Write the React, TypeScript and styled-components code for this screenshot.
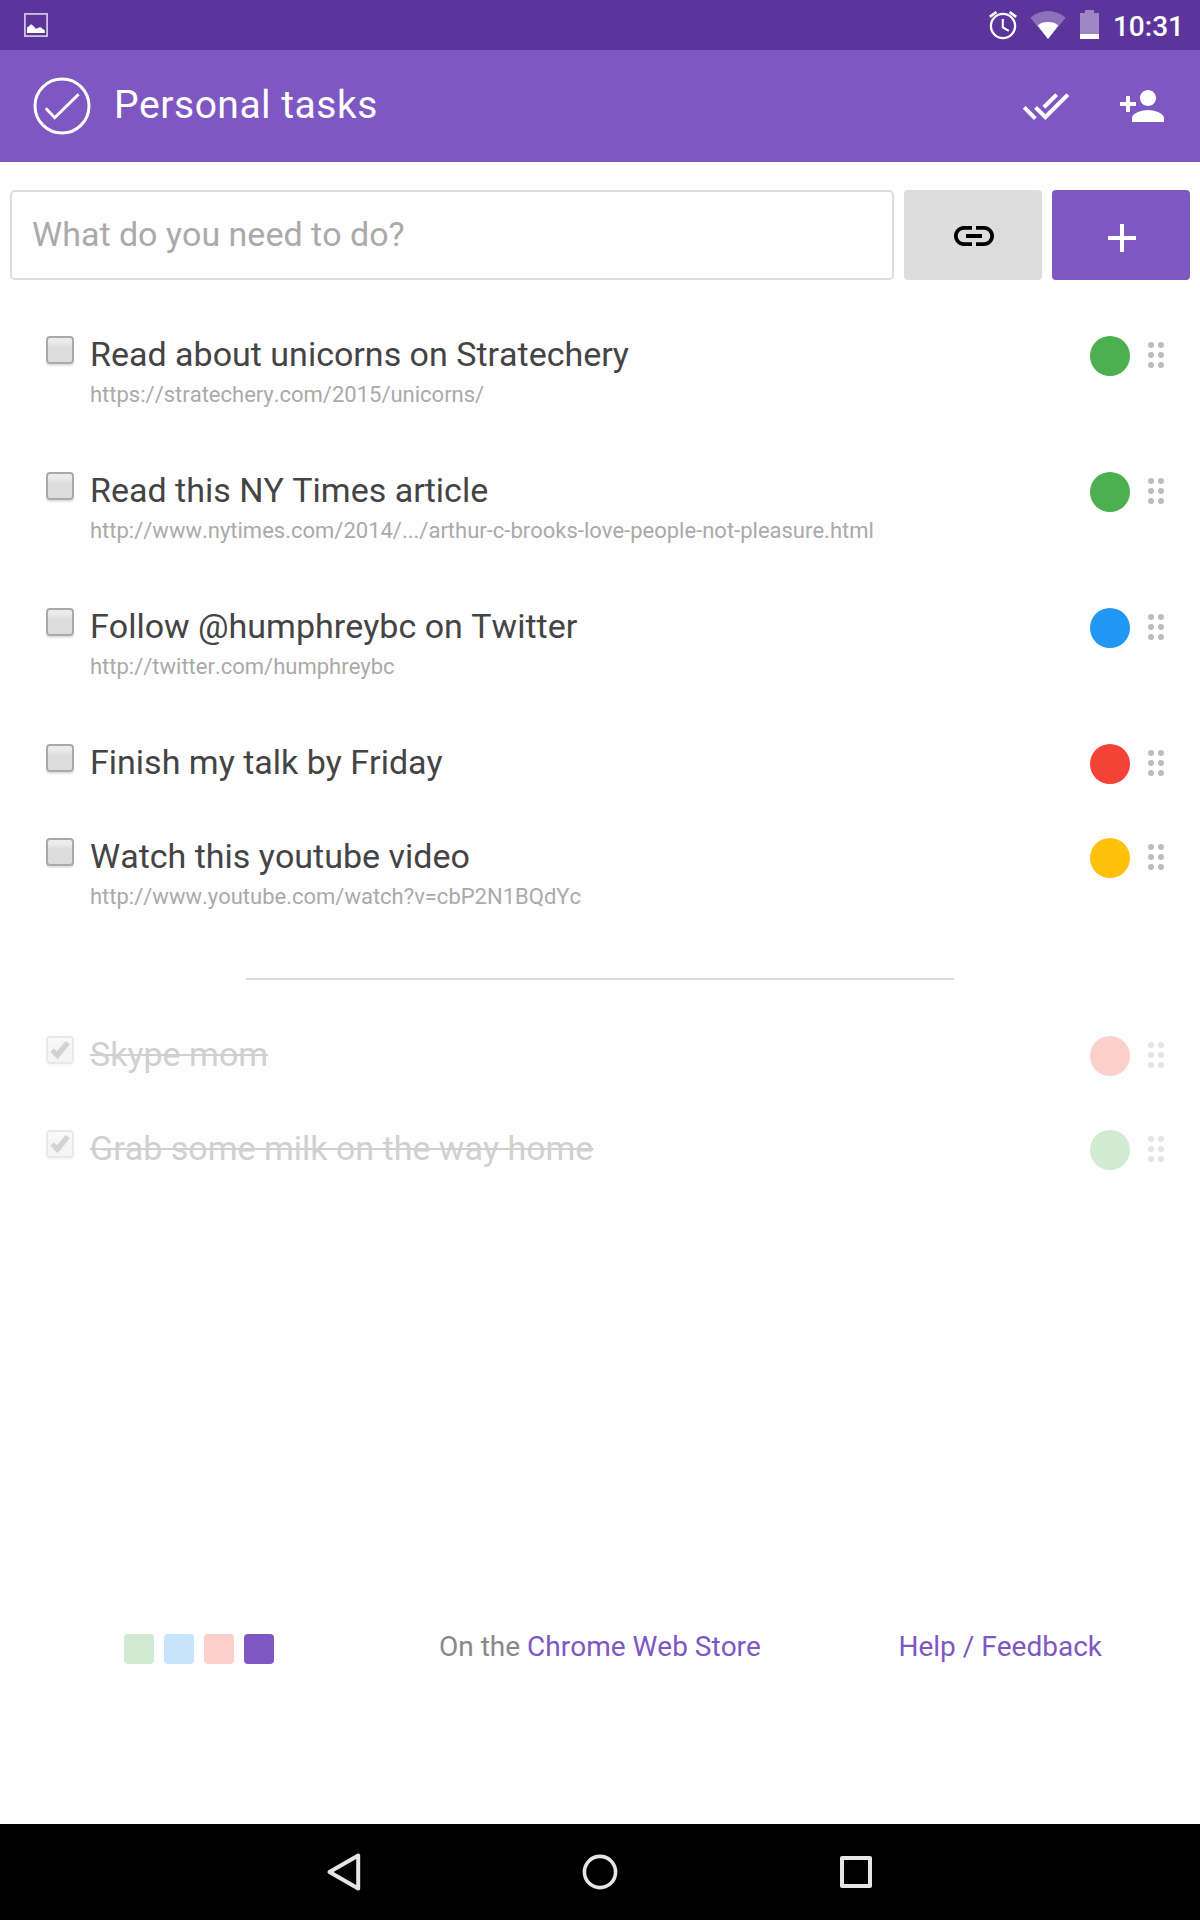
import React from "react";
import styled, { createGlobalStyle } from "styled-components";
import { MdAdd, MdDoneAll, MdLink, MdPersonAdd } from "react-icons/md";

const purple = "#7e57c2";

const GlobalStyle = createGlobalStyle`
  * { box-sizing: border-box; }
  body { margin: 0; background: #fff; font-family: Roboto, "Noto Sans", sans-serif; font-kerning: none; }
  svg { display: block; flex: none; }
  button { border: 0; padding: 0; font: inherit; color: inherit; cursor: pointer; }
`;

const Screen = styled.div`
  display: flex;
  flex-direction: column;
  width: 1200px;
  height: 1920px;
  overflow: hidden;
  background: #fefefe;
`;

const StatusBar = styled.div`
  display: flex;
  align-items: center;
  justify-content: space-between;
  height: 50px;
  padding: 0 16px 0 24px;
  background: #5b359c;
  color: #fff;
`;

const StatusIcons = styled.div`
  display: flex;
  align-items: center;
`;

const Clock = styled.span`
  margin-left: 14px;
  padding-top: 3px;
  font-size: 28px;
  line-height: 32px;
  font-weight: 500;
`;

const Header = styled.header`
  display: flex;
  align-items: center;
  height: 112px;
  padding: 0 34px 0 33px;
  background: ${purple};
  color: #fff;
`;

const Title = styled.h1`
  flex: 1;
  margin: 0 0 2px 23px;
  font-size: 39px;
  line-height: 48px;
  font-weight: 400;
  letter-spacing: 0.5px;
`;

const HeaderActions = styled.div`
  display: flex;
  gap: 48px;
`;

const HeaderButton = styled.button`
  background: none;
`;

const AddForm = styled.form`
  display: flex;
  gap: 10px;
  height: 90px;
  margin: 28px 10px 0;
`;

const TaskInput = styled.input`
  flex: 1;
  min-width: 0;
  padding: 0 20px 2px;
  border: 2px solid #ddd;
  border-radius: 5px;
  background: transparent;
  color: #444;
  font: 400 34px Roboto, sans-serif;
  font-kerning: none;
  outline: none;
  &::placeholder { color: #aaa; opacity: 1; }
`;

const FormButton = styled.button<{ $bg: string; $fg: string; $drop: number }>`
  display: flex;
  align-items: center;
  justify-content: center;
  width: 138px;
  padding: ${(p) => p.$drop}px 0 0 2px;
  border-radius: 4px;
  background: ${(p) => p.$bg};
  color: ${(p) => p.$fg};
`;

const TaskList = styled.ul`
  margin: 0;
  padding: 56px 36px 0 46px;
  list-style: none;
`;

const TaskRow = styled.li<{ $tall?: boolean }>`
  display: flex;
  align-items: flex-start;
  height: ${(p) => (p.$tall ? 136 : 94)}px;
`;

const Box = styled.span<{ $done?: boolean }>`
  flex: none;
  width: 28px;
  height: 28px;
  border: 2px solid #a9a9a9;
  border-radius: 4px;
  background: linear-gradient(#ededed 0%, #eaeaea 18%, #dedede 38%, #dcdcdc 100%);
  box-shadow: 0 2px 1px rgba(0, 0, 0, 0.1);
  opacity: ${(p) => (p.$done ? 0.25 : 1)};
`;

const CheckWrap = styled.span`
  display: grid;
  width: 28px;
  height: 28px;
  margin-right: 16px;
  > * { grid-area: 1 / 1; }
`;

const TaskBody = styled.div`
  flex: 1;
  min-width: 0;
`;

const TaskTitle = styled.div<{ $done?: boolean }>`
  width: fit-content;
  font-size: 34px;
  line-height: 36px;
  color: ${(p) => (p.$done ? "#d0d0d0" : "#444")};
  text-decoration: ${(p) => (p.$done ? "line-through" : "none")};
  text-decoration-thickness: 2px;
`;

const TaskUrl = styled.div`
  font-size: 22px;
  line-height: 26px;
  margin-top: 10px;
  color: #aaa;
`;

const Label = styled.span<{ $color: string; $done?: boolean }>`
  width: 40px;
  height: 40px;
  border-radius: 50%;
  background: ${(p) => p.$color};
  opacity: ${(p) => (p.$done ? 0.25 : 1)};
`;

const Handle = styled.span<{ $done?: boolean }>`
  display: grid;
  grid-template-columns: 6px 6px;
  grid-auto-rows: 6px;
  gap: 4px;
  margin: 6px 0 0 18px;
  opacity: ${(p) => (p.$done ? 0.4 : 1)};
  > i { border-radius: 50%; background: #bdbdbd; }
`;

const Divider = styled.hr`
  width: 708px;
  height: 2px;
  margin: 4px auto 0;
  border: 0;
  background: #ddd;
`;

const Footer = styled.footer`
  display: flex;
  align-items: center;
  height: 30px;
  margin: auto 98px 160px 124px;
  font-size: 28px;
  line-height: 34px;
  color: #888;
`;

const Swatches = styled.div`
  display: flex;
  gap: 10px;
`;

const Swatch = styled.span<{ $color: string; $faded?: boolean }>`
  width: 30px;
  height: 30px;
  border-radius: 4px;
  background: ${(p) => p.$color};
  opacity: ${(p) => (p.$faded ? 0.25 : 1)};
`;

const StoreText = styled.span`
  margin: 0 auto 5px 165px;
`;

const HelpText = styled.span`
  margin-bottom: 5px;
`;

const Link = styled.a`
  color: ${purple};
  text-decoration: none;
`;

const NavBar = styled.nav`
  display: flex;
  align-items: center;
  justify-content: center;
  gap: 208px;
  height: 96px;
  background: #000;
`;

const WifiIcon = styled.svg`
  margin-left: 13px;
`;

const BatteryIcon = styled.svg`
  margin-left: 14px;
`;

const Picture = () => (
  <svg width="24" height="24" viewBox="0 0 24 24">
    <rect x="0.9" y="0.9" width="22.2" height="22.2" fill="none" stroke="#dcd3ea" strokeWidth="1.6" />
    <path d="M3 20V14.5Q5 13.5 7 11.3Q10 12.5 11.5 15.5Q13 16 15.5 14.2Q18 14 18.5 16Q20 16 20.8 17.5V20Z" fill="#fff" />
  </svg>
);

const Alarm = () => (
  <svg width="28" height="30" viewBox="0 0 28 30" fill="none" stroke="#fff">
    <circle cx="14" cy="16" r="12.1" strokeWidth="2.3" />
    <path d="M13.8 9V17.4L19.8 20.8" strokeWidth="2.1" />
    <path d="M.8 6.8L7.4 2M27.2 6.8L20.6 2" strokeWidth="2.7" />
  </svg>
);

const Wifi = () => (
  <WifiIcon width="36" height="30" viewBox="0 0 36 30">
    <path d="M18 29L.5 7.7Q8 1 18 1T35.5 7.7Z" fill="#8e71bb" />
    <path d="M18 29L7.6 15.4Q11.5 12 18 12T28.4 15.4Z" fill="#fff" />
  </WifiIcon>
);

const Battery = () => (
  <BatteryIcon width="19" height="30" viewBox="0 0 19 30">
    <path d="M0 3H5V0H14V3H19V24H0Z" fill="#9f87c6" />
    <path d="M0 24H19V29H0Z" fill="#fff" />
  </BatteryIcon>
);

const Logo = () => (
  <svg width="58" height="58" viewBox="0 0 58 58" fill="none" stroke="#fff">
    <circle cx="29" cy="29" r="27" strokeWidth="3" />
    <path d="M12.8 31.3L21.7 40.7L45.6 17.2" strokeWidth="3" />
  </svg>
);

const Tick = () => (
  <svg width="28" height="28" viewBox="0 0 28 28">
    <path d="M4.3 15.8L7.8 12.4L11 15.3L19.6 4.9L24 8L11.6 23.3Z" fill="#cfcfcf" />
  </svg>
);

type Task = { title: string; url?: string; color: string; done?: boolean };

const tasks: Task[] = [
  { title: "Read about unicorns on Stratechery", url: "https://stratechery.com/2015/unicorns/", color: "#4caf50" },
  { title: "Read this NY Times article", url: "http://www.nytimes.com/2014/.../arthur-c-brooks-love-people-not-pleasure.html", color: "#4caf50" },
  { title: "Follow @humphreybc on Twitter", url: "http://twitter.com/humphreybc", color: "#2196f3" },
  { title: "Finish my talk by Friday", color: "#f44336" },
  { title: "Watch this youtube video", url: "http://www.youtube.com/watch?v=cbP2N1BQdYc", color: "#ffc107" },
];

const doneTasks: Task[] = [
  { title: "Skype mom", color: "#f44336", done: true },
  { title: "Grab some milk on the way home", color: "#4caf50", done: true },
];

const TaskItem = ({ title, url, color, done }: Task) => (
  <TaskRow $tall={!!url}>
    <CheckWrap>
      <Box $done={done} />
      {done && <Tick />}
    </CheckWrap>
    <TaskBody>
      <TaskTitle $done={done}>{title}</TaskTitle>
      {url && <TaskUrl>{url}</TaskUrl>}
    </TaskBody>
    <Label $color={color} $done={done} />
    <Handle $done={done}>
      <i /><i /><i /><i /><i /><i />
    </Handle>
  </TaskRow>
);

export default function App() {
  return (
    <>
      <GlobalStyle />
      <Screen>
        <StatusBar>
          <Picture />
          <StatusIcons>
            <Alarm />
            <Wifi />
            <Battery />
            <Clock>10:31</Clock>
          </StatusIcons>
        </StatusBar>
        <Header>
          <Logo />
          <Title>Personal tasks</Title>
          <HeaderActions>
            <HeaderButton aria-label="Complete all"><MdDoneAll size={48} /></HeaderButton>
            <HeaderButton aria-label="Add person"><MdPersonAdd size={48} /></HeaderButton>
          </HeaderActions>
        </Header>
        <AddForm onSubmit={(e) => e.preventDefault()}>
          <TaskInput placeholder="What do you need to do?" />
          <FormButton type="button" aria-label="Attach link" $bg="#ddd" $fg="#000" $drop={2}><MdLink size={48} /></FormButton>
          <FormButton type="submit" aria-label="Add task" $bg={purple} $fg="#fff" $drop={6}><MdAdd size={48} /></FormButton>
        </AddForm>
        <TaskList>
          {tasks.map((t) => <TaskItem key={t.title} {...t} />)}
        </TaskList>
        <Divider />
        <TaskList>
          {doneTasks.map((t) => <TaskItem key={t.title} {...t} />)}
        </TaskList>
        <Footer>
          <Swatches>
            <Swatch $color="#4caf50" $faded />
            <Swatch $color="#2196f3" $faded />
            <Swatch $color="#f44336" $faded />
            <Swatch $color={purple} />
          </Swatches>
          <StoreText>On the <Link href="#">Chrome Web Store</Link></StoreText>
          <HelpText><Link href="#">Help / Feedback</Link></HelpText>
        </Footer>
        <NavBar>
          <svg width="48" height="48" viewBox="0 0 48 48" fill="none" stroke="#e6e6e6" strokeWidth="4" strokeLinejoin="round">
            <path d="M9.5 24L38.2 7.5V40.5Z" />
          </svg>
          <svg width="48" height="48" viewBox="0 0 48 48" fill="none" stroke="#e6e6e6" strokeWidth="3.6">
            <circle cx="24" cy="24" r="15.6" />
          </svg>
          <svg width="48" height="48" viewBox="0 0 48 48" fill="none" stroke="#e6e6e6" strokeWidth="4" strokeLinejoin="round">
            <path d="M10 10H38V38H10Z" />
          </svg>
        </NavBar>
      </Screen>
    </>
  );
}
